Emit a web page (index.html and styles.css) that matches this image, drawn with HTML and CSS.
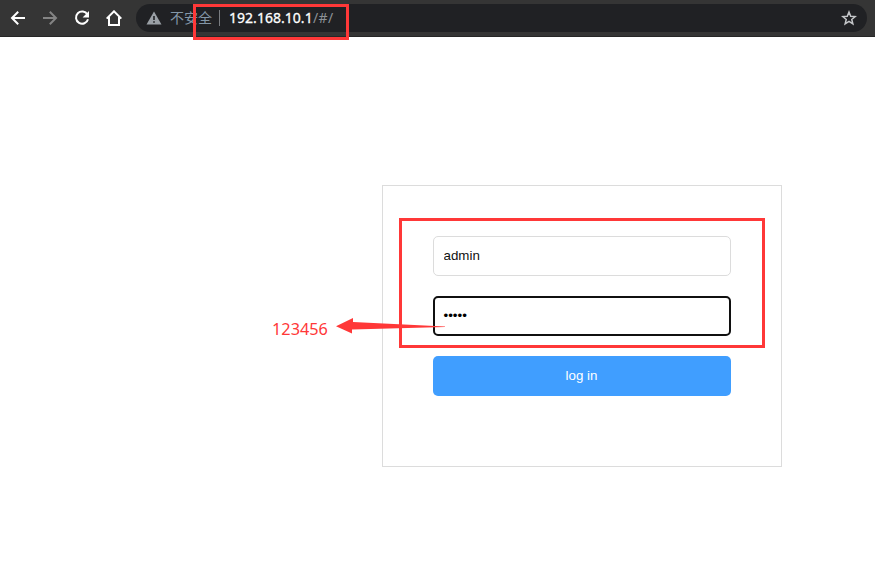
FILE: index.html
```html
<!DOCTYPE html>
<html lang="en">
<head>
<meta charset="utf-8">
<title>Router login</title>
<link rel="stylesheet" href="styles.css">
</head>
<body>
<header class="toolbar">
  <nav class="nav">
    <svg class="icon" viewBox="0 0 16 16"><path d="M15 8H2.500M8.200 1.800L2 8l6.200 6.200"/></svg>
    <svg class="icon icon-off" viewBox="0 0 16 16"><path d="M1 8h12.500M7.800 1.800L14 8l-6.200 6.200"/></svg>
    <svg class="icon" viewBox="0 0 16 16"><path d="M13.400 4.600A6.100 6.100 0 1 0 14 9.200"/><path class="solid" d="M15 1v6.400H8.600z"/></svg>
    <svg class="icon" viewBox="0 0 16 16"><path d="M.7 8.600L8 1.300l7.300 7.300M3 7v8h10V7"/></svg>
  </nav>
  <div class="address">
    <svg class="warn" viewBox="0 0 16 14"><path fill="#9aa0a6" d="M8 .5L15.500 13.500H.5z"/><path fill="#202124" d="M7.200 5h1.600v4H7.200zM7.200 10.200h1.600v1.600H7.200z"/></svg>
    <span class="insecure">不安全</span>
    <span class="divider"></span>
    <span class="url"><span class="host">192.168.10.1</span><span class="path">/#/</span></span>
    <svg class="star" viewBox="0 0 16 16"><path d="M8 2l1.700 4.200 4.500.35-3.450 2.900 1.100 4.400L8 11.450l-3.850 2.400 1.100-4.400L1.800 6.550l4.500-.35z"/></svg>
  </div>
</header>
<main class="page">
  <form class="card">
    <input class="field" type="text" value="admin">
    <div class="field field-focus">•••••</div>
    <button class="submit" type="button">log in</button>
  </form>
</main>
<div class="mark mark-url"></div>
<div class="mark mark-form"></div>
<div class="note">123456</div>
<svg class="arrow" viewBox="0 0 112 20"><path d="M0 9.200L17 1v4l92 4.500v.5L16 12.500v4z"/></svg>
</body>
</html>
```
FILE: styles.css
```css
* { box-sizing: border-box; }
body {
  margin: 0;
  height: 574px;
  overflow: hidden;
  background: #fff;
  font-family: "Liberation Sans", Arial, sans-serif;
}
.toolbar {
  display: flex;
  align-items: center;
  height: 37px;
  padding: 0 8px 1px 10px;
  background: #353535;
  border-bottom: 1px solid #262626;
}
.nav { display: flex; gap: 16px; margin-right: 14px; }
.icon {
  width: 16px;
  height: 16px;
  fill: none;
  stroke: #fff;
  stroke-width: 2;
}
.icon-off { stroke: #848484; }
.solid { fill: #fff; stroke: none; }
.address {
  flex: 1;
  display: flex;
  align-items: center;
  height: 28px;
  padding: 0 10px 0 10px;
  border-radius: 14px;
  background: #202124;
  font-size: 14px;
  line-height: 20px;
}
.warn { width: 16px; height: 14px; margin-right: 8px; }
.insecure {
  width: 42px;
  padding-bottom: 2px;
  color: #8397a8;
  font-family: "Noto Sans CJK SC", sans-serif;
  white-space: nowrap;
}
.divider { width: 1px; height: 16px; margin: 0 9px 0 7px; background: #7a7d81; }
.url { font-family: "Noto Sans", sans-serif; white-space: nowrap; font-size: 14px; }
.host { display: inline-block; width: 84px; color: #fff; letter-spacing: 0.03px; -webkit-text-stroke: 0.3px #fff; }
.path { color: #8d9196; letter-spacing: 0.4px; }
.star {
  width: 16px;
  height: 16px;
  margin-left: auto;
  fill: none;
  stroke: #c4c6c9;
  stroke-width: 1.500;
}
.page { padding: 148px 93px 0 382px; }
.card {
  display: flex;
  flex-direction: column;
  gap: 20px;
  width: 400px;
  height: 282px;
  padding: 50px;
  border: 1px solid #dcdcdc;
}
.field {
  flex: none;
  width: 298px;
  height: 40px;
  padding: 0 10px 2px 9.500px;
  border: 1px solid #dcdcdc;
  border-radius: 5px;
  outline: 0;
  background: #fff;
  color: #111;
  font: 13.333px/36px "Liberation Sans", Arial, sans-serif;
}
.field-focus { padding: 0 8.500px; border: 2px solid #101010; color: #000; line-height: 36px; }
.submit {
  flex: none;
  width: 298px;
  height: 40px;
  padding: 0 1px 2px 0;
  border: 0;
  border-radius: 5px;
  background: #409eff;
  color: #fff;
  font: 13.333px "Liberation Sans", Arial, sans-serif;
}
/* Annotations lie over the page */
.mark { position: absolute; border: 3px solid #ff3838; }
.mark-url { left: 193px; top: 4px; width: 156px; height: 36px; }
.mark-form { left: 399px; top: 218px; width: 366px; height: 130px; }
.note {
  position: absolute;
  left: 272px;
  top: 318px;
  color: #ff3838;
  font: 16.300px/22px "Noto Sans", sans-serif;
}
.arrow { position: absolute; left: 336px; top: 317px; width: 112px; height: 20px; fill: #ff3838; }
```
